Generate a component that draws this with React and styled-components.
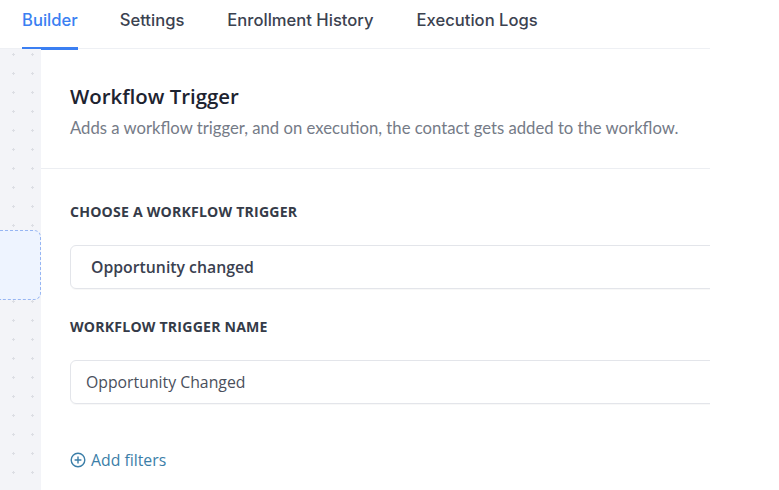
import styled, { createGlobalStyle } from "styled-components";

const Global = createGlobalStyle`
  html, body { margin: 0; padding: 0; background: #fff; }
  body { font-family: "Open Sans", "Liberation Sans", sans-serif; }
`;

const Page = styled.div`
  width: 779px;
  height: 490px;
  display: flex;
  flex-direction: column;
  background: #fff;
`;

const Tabs = styled.nav`
  width: 710px;
  height: 49px;
  display: flex;
  align-items: stretch;
  padding-left: 22px;
  box-sizing: border-box;
  border-bottom: 1px solid #eef0f4;
`;

const Tab = styled.div`
  font-family: Inter, "Liberation Sans", sans-serif;
  font-size: 16.6px;
  font-weight: 500;
  color: ${(p) => (p.$active ? "#3b7ff2" : "#3b4250")};
  margin-right: ${(p) => p.$gap}px;
  display: flex;
  align-items: flex-start;
  padding-top: 10px;
  box-sizing: border-box;
  border-bottom: 3px solid ${(p) => (p.$active ? "#3b7ff2" : "transparent")};
  margin-bottom: -2px;
`;

const Body = styled.div`
  flex: 1;
  display: flex;
  width: 710px;
  overflow: hidden;
`;

const Rail = styled.div`
  width: 41px;
  flex: none;
  background-color: #f3f4f8;
  background-image: radial-gradient(circle, #dcdee4 1px, transparent 1.4px);
  background-size: 19px 19px;
  background-position: 4px -4px;
  padding-top: 181px;
  box-sizing: border-box;
`;

const DropZone = styled.div`
  height: 68px;
  background: #eef4ff;
  border: 1px dashed #97b6f3;
  border-left: none;
  border-radius: 0 7px 7px 0;
`;

const Panel = styled.section`
  flex: 1;
  min-width: 0;
  display: flex;
  flex-direction: column;
`;

const Header = styled.header`
  padding: 33px 0 29px 29px;
  border-bottom: 1px solid #eceef2;
`;

const Title = styled.h2`
  margin: 0;
  font-size: 20.4px;
  font-weight: 600;
  color: #1d2330;
  line-height: 28px;
`;

const Subtitle = styled.p`
  margin: 7px 0 0;
  font-family: Lato, "Open Sans", sans-serif;
  font-size: 16.7px;
  color: #757b87;
  line-height: 22px;
`;

const Form = styled.div`
  padding: 34px 0 0 29px;
  display: flex;
  flex-direction: column;
`;

const Label = styled.div`
  font-size: 14.1px;
  font-weight: 700;
  letter-spacing: 0.2px;
  color: #353b48;
  line-height: 18px;
  margin-bottom: 24px;
`;

const Field = styled.div`
  width: 700px;
  height: 44px;
  box-sizing: border-box;
  border: 1px solid #e3e5ea;
  border-radius: 6px;
  display: flex;
  align-items: center;
  padding-left: ${(p) => p.$pad}px;
  font-size: 15.8px;
  font-weight: ${(p) => (p.$strong ? 600 : 400)};
  color: ${(p) => (p.$strong ? "#3a4150" : "#4a505c")};
  margin-bottom: ${(p) => p.$after}px;
  box-shadow: 0 1px 1px rgba(0, 0, 0, 0.03);
`;

const AddFilters = styled.button`
  align-self: flex-start;
  display: flex;
  align-items: center;
  gap: 5px;
  border: none;
  background: none;
  padding: 0;
  height: 22px;
  font-family: "Open Sans", sans-serif;
  font-size: 15.8px;
  color: #3b7ea8;
  cursor: pointer;
`;

function PlusCircle() {
  return (
    <svg width="16" height="16" viewBox="0 0 16 16" fill="none" stroke="#3b7ea8" strokeWidth="1.4">
      <circle cx="8" cy="8" r="6.8" />
      <path d="M8 4.6v6.8M4.6 8h6.8" />
    </svg>
  );
}

export default function App() {
  return (
    <Page>
      <Global />
      <Tabs>
        <Tab $active $gap={42}>Builder</Tab>
        <Tab $gap={43}>Settings</Tab>
        <Tab $gap={43}>Enrollment History</Tab>
        <Tab $gap={0}>Execution Logs</Tab>
      </Tabs>
      <Body>
        <Rail>
          <DropZone />
        </Rail>
        <Panel>
          <Header>
            <Title>Workflow Trigger</Title>
            <Subtitle>Adds a workflow trigger, and on execution, the contact gets added to the workflow.</Subtitle>
          </Header>
          <Form>
            <Label>CHOOSE A WORKFLOW TRIGGER</Label>
            <Field $strong $pad={20} $after={29}>Opportunity changed</Field>
            <Label>WORKFLOW TRIGGER NAME</Label>
            <Field $pad={15} $after={45}>Opportunity Changed</Field>
            <AddFilters>
              <PlusCircle />
              Add filters
            </AddFilters>
          </Form>
        </Panel>
      </Body>
    </Page>
  );
}
